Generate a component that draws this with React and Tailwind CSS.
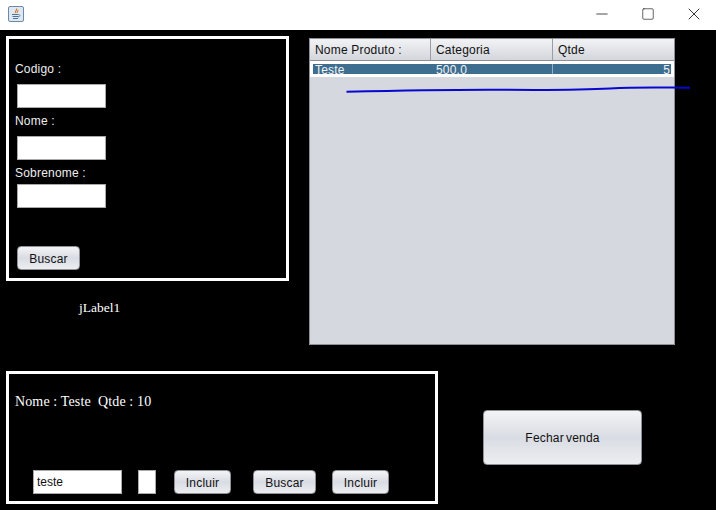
import { Minus, Square, X } from "lucide-react";

const sans = "font-['Liberation_Sans',Arial,sans-serif]";
const btn =
  "rounded-[4px] border border-[#8f9296] bg-gradient-to-b from-[#f3f4f6] via-[#d9dce3] to-[#eceef1] text-[12px] text-[#111] tracking-[0.2px] pt-[1px] flex items-center justify-center";

function Field({ className }) {
  return <div className={`bg-white border border-[#a9a9a9] ${className}`} />;
}

function FormLabel({ children, className }) {
  return <div className={`text-[12px] leading-[14px] text-[#eeeeee] tracking-[0.2px] ${className}`}>{children}</div>;
}

function JavaIcon() {
  return (
    <svg width="16" height="16" viewBox="0 0 16 16">
      <rect x="0.5" y="0.5" width="15" height="15" rx="1.5" fill="#dfe8f2" stroke="#6d89a8" />
      <path d="M8.5 2.5c1 1.5-2 2.5-1 4.5M10 4c.5 1-1.5 1.500-.8 3" fill="none" stroke="#d9751e" strokeWidth="1.1" />
      <path d="M4 8.500h6.500M4.500 10.500h6M5 12.500h5" stroke="#4f7396" strokeWidth="1" />
      <path d="M10.500 8.500c2 0 2 2-.5 2.500" fill="none" stroke="#4f7396" strokeWidth="0.8" />
    </svg>
  );
}

export default function App() {
  return (
    <div className={`w-[716px] h-[510px] bg-black overflow-hidden relative ${sans}`}>
      {/* barra de titulo */}
      <div className="h-[30px] bg-white flex items-center justify-between">
        <div className="ml-[8px] mb-[2px]">
          <JavaIcon />
        </div>
        <div className="flex items-center mb-[2px] text-[#111]">
          <div className="w-[46px] flex justify-center"><Minus size={18} strokeWidth={1} /></div>
          <div className="w-[46px] flex justify-center"><Square size={14} strokeWidth={1.1} /></div>
          <div className="w-[46px] flex justify-center mr-[-1px]"><X size={20} strokeWidth={1} /></div>
        </div>
      </div>

      <div className="flex items-start pl-[6px] pt-[6px]">
        {/* busca de cliente */}
        <div className="w-[283px]">
          <div className="h-[245px] border-[3px] border-white pl-[6px] flex flex-col">
            <FormLabel className="mt-[23px]">Codigo :</FormLabel>
            <Field className="w-[89px] h-[24px] ml-[2px] mt-[8px]" />
            <FormLabel className="mt-[6px]">Nome :</FormLabel>
            <Field className="w-[89px] h-[24px] ml-[2px] mt-[8px]" />
            <FormLabel className="mt-[6px]">Sobrenome :</FormLabel>
            <Field className="w-[89px] h-[24px] ml-[2px] mt-[4px]" />
            <div className={`${btn} w-[63px] h-[24px] ml-[2px] mt-[38px]`}>Buscar</div>
          </div>
          <div className="mt-[19px] ml-[73px] font-['Liberation_Serif',serif] text-[13.5px] leading-[16px] text-white">jLabel1</div>
        </div>

        {/* tabela */}
        <div className="ml-[20px] mt-[2px] w-[366px] h-[307px] bg-[#d5d8df] border border-[#8d9096] flex flex-col">
          <div className="h-[22px] flex bg-gradient-to-b from-[#f2f3f5] to-[#d3d6dc] text-[12px] text-[#111] tracking-[0.2px] border-b border-[#8d9096]">
            <div className="w-[121px] pl-[5px] border-r border-[#9a9da3] leading-[23px]">Nome Produto :</div>
            <div className="w-[122px] pl-[5px] border-r border-[#9a9da3] leading-[23px]">Categoria</div>
            <div className="flex-1 pl-[5px] leading-[23px]">Qtde</div>
          </div>
          <div className="h-[16px] bg-white py-[3px] pl-[3px] pr-[3px] shrink-0">
            <div className="h-[10px] bg-[#3d6d8f] flex text-[12px] leading-[12px] text-[#f2f2f2] overflow-hidden tracking-[0.2px]">
              <div className="w-[122px] pl-[2px]">Teste</div>
              <div className="w-[118px] pl-[1px] border-r border-[#8fb0c8]">500.0</div>
              <div className="flex-1 text-right pr-[1px]">5</div>
            </div>
          </div>
        </div>
      </div>

      {/* area inferior */}
      <div className="flex items-start pl-[6px] mt-[26px]">
        <div className="w-[432px] h-[133px] border-[3px] border-white flex flex-col">
          <div className="mt-[20px] ml-[6px] font-['Liberation_Serif',serif] text-[14px] leading-[16px] text-white tracking-[0.13px] whitespace-pre">
            Nome : Teste  Qtde : 10
          </div>
          <div className="flex items-center ml-[24px] mt-[60px]">
            <div className="w-[89px] h-[24px] bg-white border border-[#a9a9a9] text-[12px] leading-[22px] pl-[3px] text-[#111]">teste</div>
            <Field className="w-[18px] h-[24px] ml-[16px]" />
            <div className={`${btn} w-[57px] h-[24px] ml-[18px]`}>Incluir</div>
            <div className={`${btn} w-[63px] h-[24px] ml-[22px]`}>Buscar</div>
            <div className={`${btn} w-[57px] h-[24px] ml-[16px]`}>Incluir</div>
          </div>
        </div>
        <div className={`${btn} w-[159px] h-[55px] ml-[45px] mt-[39px] [word-spacing:-1.5px]`}>Fechar venda</div>
      </div>

      {/* risco azul feito sobre a tela */}
      <svg className="absolute left-[340px] top-[82px]" width="356" height="14" viewBox="0 0 356 14">
        <path d="M6.500 9.800C60 8.500 120 7.500 165 7.800S240 8.200 270 6.500 320 5.600 350 5.800" fill="none" stroke="#0808d0" strokeWidth="2" />
      </svg>
    </div>
  );
}
